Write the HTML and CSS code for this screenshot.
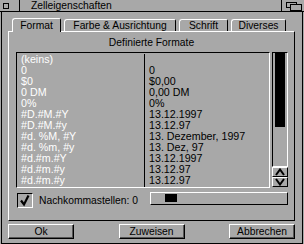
FILE: index.html
```html
<!DOCTYPE html>
<html lang="de">
<head>
<meta charset="utf-8">
<title>Zelleigenschaften</title>
<link rel="stylesheet" href="styles.css">
</head>
<body>
<div class="win">
  <div class="titlebar">
    <div class="tb-menu"><span class="tb-square"></span></div>
    <div class="tb-title">Zelleigenschaften</div>
    <div class="tb-restore">
      <svg class="restore-icon" width="16" height="9" viewBox="0 0 16 9">
        <rect x="0.5" y="0.5" width="10" height="5" fill="none" stroke="#000"/>
        <rect x="4.5" y="2.5" width="11" height="6" fill="#a8a8a8" stroke="#000"/>
      </svg>
    </div>
  </div>
  <div class="frame">
    <div class="tabs">
      <div class="tab tab-format active">Format</div>
      <div class="tab tab-farbe">Farbe &amp; Ausrichtung</div>
      <div class="tab tab-schrift">Schrift</div>
      <div class="tab tab-div">Diverses</div>
    </div>
    <div class="panel">
      <div class="heading">Definierte Formate</div>
      <div class="listarea">
        <div class="listbox">
          <div class="col col-code">
            <div class="row">(keins)</div>
            <div class="row">0</div>
            <div class="row">$0</div>
            <div class="row">0 DM</div>
            <div class="row">0%</div>
            <div class="row">#D.#M.#Y</div>
            <div class="row">#D.#M.#y</div>
            <div class="row">#d. %M, #Y</div>
            <div class="row">#d. %m, #y</div>
            <div class="row">#d.#m.#Y</div>
            <div class="row">#d.#m.#y</div>
            <div class="row">#d.#m.#y</div>
          </div>
          <div class="col col-sample">
            <div class="row"></div>
            <div class="row">0</div>
            <div class="row">$0,00</div>
            <div class="row">0,00 DM</div>
            <div class="row">0%</div>
            <div class="row">13.12.1997</div>
            <div class="row">13.12.97</div>
            <div class="row">13. Dezember, 1997</div>
            <div class="row">13. Dez, 97</div>
            <div class="row">13.12.1997</div>
            <div class="row">13.12.97</div>
            <div class="row">13.12.97</div>
          </div>
        </div>
        <div class="scrollbar">
          <div class="track"><div class="thumb"></div></div>
          <div class="arrow">
            <svg width="12" height="8" viewBox="0 0 12 8"><path d="M2 7 L6 1.5 L10 7" fill="none" stroke="#000" stroke-width="2"/></svg>
          </div>
          <div class="arrow">
            <svg width="12" height="8" viewBox="0 0 12 8"><path d="M2 1 L6 6.5 L10 1" fill="none" stroke="#000" stroke-width="2"/></svg>
          </div>
        </div>
      </div>
      <div class="optrow">
        <div class="checkbox">
          <svg width="14" height="13" viewBox="0 0 14 13"><path d="M3 6.5 L6 10.5 L10.5 1.5" fill="none" stroke="#000" stroke-width="2.2"/></svg>
        </div>
        <span class="optlabel">Nachkommastellen: 0</span>
        <div class="slider"><div class="slider-thumb"></div></div>
      </div>
    </div>
    <div class="buttons">
      <div class="btn">Ok</div>
      <div class="btn">Zuweisen</div>
      <div class="btn">Abbrechen</div>
    </div>
  </div>
</div>
</body>
</html>
```

FILE: styles.css
```css
html, body {
  margin: 0;
  padding: 0;
}

body {
  width: 304px;
  height: 244px;
  overflow: hidden;
  background: #a8a8a8;
  font-family: "Liberation Sans", Arial, sans-serif;
  font-size: 10.3px;
  color: #000;
}

.win {
  width: 304px;
  height: 244px;
}

/* title bar */
.titlebar {
  display: flex;
  height: 11px;
  border-bottom: 1px solid #000;
}

.tb-menu {
  box-sizing: border-box;
  width: 20px;
  border-right: 1px solid #000;
}

.tb-square {
  display: block;
  box-sizing: border-box;
  width: 6px;
  height: 6px;
  margin: 3px 0 0 3px;
  border: 1px solid #000;
}

.tb-title {
  flex: 1;
  padding-left: 11px;
  line-height: 11px;
}

.tb-restore {
  box-sizing: border-box;
  width: 23px;
  border-left: 1px solid #000;
  padding: 2px 0 0 4px;
}

.restore-icon {
  display: block;
}

/* window frame */
.frame {
  box-sizing: border-box;
  height: 232px;
  margin: 0 1px;
  border: 1px solid #000;
  border-top: 0;
  padding: 6px 7px 0 6px;
}

/* tabs */
.tabs {
  display: flex;
  align-items: flex-end;
  height: 13px;
  padding-left: 4px;
  gap: 3px;
}

.tab {
  box-sizing: border-box;
  height: 12px;
  border: 1px solid;
  border-color: #fff #000 transparent #fff;
  border-bottom: 0;
  border-radius: 3px 2px 0 0;
  text-align: center;
  line-height: 11px;
  white-space: nowrap;
}

.tab.active {
  position: relative;
  z-index: 1;
  height: 14px;
  margin-bottom: -1px;
  padding-top: 1px;
  background: #a8a8a8;
}

.tab-format { width: 49px; }
.tab-farbe { width: 112px; }
.tab-schrift { width: 49px; }
.tab-div { width: 55px; }

/* panel */
.panel {
  box-sizing: border-box;
  height: 190px;
  border: 1px solid;
  border-color: #fff #000 #000 #fff;
}

.heading {
  margin-top: 5px;
  line-height: 11px;
  text-align: center;
}

.listarea {
  display: flex;
  height: 136px;
  margin: 4px 0 0 7px;
}

.listbox {
  box-sizing: border-box;
  display: flex;
  width: 254px;
  border: 1px solid;
  border-color: #000 #fff #fff #000;
  padding-top: 1px;
  font-size: 10.7px;
}

.col {
  box-sizing: border-box;
  padding-left: 4px;
}

.col-code {
  width: 128px;
  border-right: 1px solid #000;
  color: #fff;
}

.col-sample {
  flex: 1;
}

.row {
  height: 11px;
  line-height: 11px;
  white-space: nowrap;
}

/* scrollbar */
.scrollbar {
  display: flex;
  flex-direction: column;
  width: 16px;
  margin-left: 2px;
}

.track {
  box-sizing: border-box;
  height: 115px;
  border: 1px solid;
  border-color: #000 #fff #fff #000;
  padding: 0 2px;
}

.thumb {
  height: 74px;
  background: #000;
}

.arrow {
  box-sizing: border-box;
  height: 10px;
  border: 1px solid;
  border-color: #fff #000 #000 #fff;
  display: flex;
  align-items: center;
  justify-content: center;
}

.arrow svg {
  display: block;
}

/* option row */
.optrow {
  display: flex;
  align-items: center;
  height: 15px;
  margin-top: 5px;
}

.checkbox {
  box-sizing: border-box;
  width: 16px;
  height: 15px;
  margin-left: 8px;
  border: 1px solid;
  border-color: #000 #fff #fff #000;
  display: flex;
  align-items: center;
  justify-content: center;
}

.checkbox svg {
  display: block;
}

.optlabel {
  margin-left: 6px;
  line-height: 11px;
}

.slider {
  box-sizing: border-box;
  align-self: flex-start;
  width: 138px;
  height: 13px;
  margin: -1px 6px 0 auto;
  border: 1px solid;
  border-color: #fff #000 #000 #fff;
  padding: 1px 0 0 14px;
}

.slider-thumb {
  width: 12px;
  height: 8px;
  background: #000;
}

/* buttons */
.buttons {
  display: flex;
  justify-content: space-between;
  margin-top: 3px;
}

.btn {
  box-sizing: border-box;
  width: 66px;
  height: 15px;
  border: 1px solid;
  border-color: #fff #000 #000 #fff;
  box-shadow: inset -1px -1px 0 #555;
  text-align: center;
  line-height: 13px;
}
```
